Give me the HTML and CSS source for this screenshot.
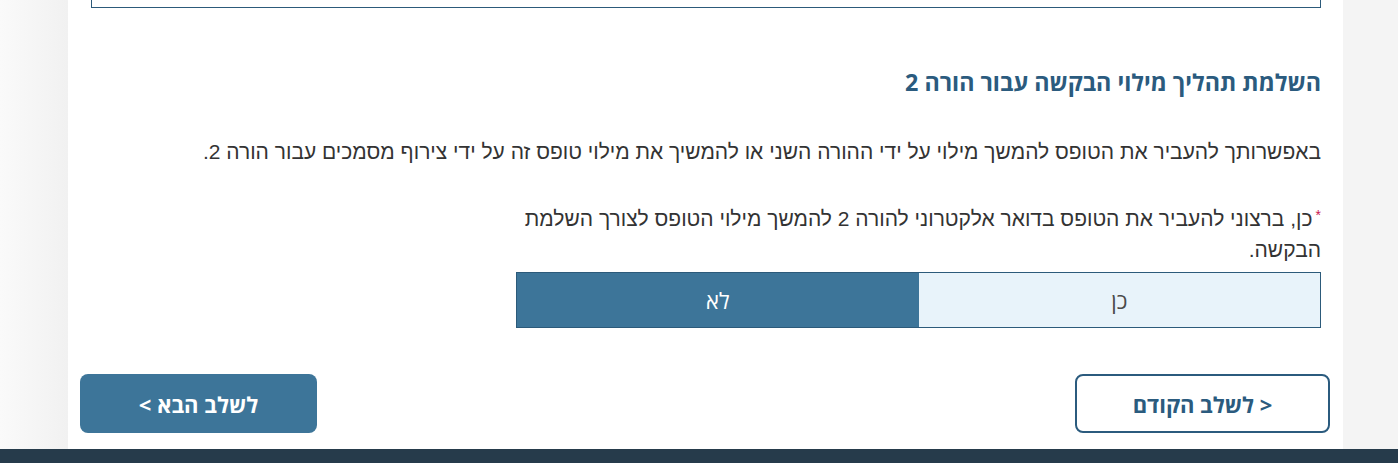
FILE: index.html
```html
<!DOCTYPE html>
<html lang="he">
<head>
<meta charset="utf-8">
<title>השלמת תהליך</title>
<link rel="stylesheet" href="styles.css">
</head>
<body>
<div class="page">
  <main class="content" dir="rtl">
    <div class="prev-box"></div>
    <section class="section">
      <h2 class="title">השלמת תהליך מילוי הבקשה עבור הורה 2</h2>
      <p class="intro">באפשרותך להעביר את הטופס להמשך מילוי על ידי ההורה השני או להמשיך את מילוי טופס זה על ידי צירוף מסמכים עבור הורה 2.</p>
      <div class="question">
        <p class="label"><span class="req">*</span>כן, ברצוני להעביר את הטופס בדואר אלקטרוני להורה 2 להמשך מילוי הטופס לצורך השלמת הבקשה.</p>
        <div class="toggle">
          <button class="opt">כן</button>
          <button class="opt selected">לא</button>
        </div>
      </div>
    </section>
    <div class="nav">
      <button class="btn btn-prev"><span class="chev" dir="ltr">&gt;</span> לשלב הקודם</button>
      <button class="btn btn-next">לשלב הבא <span class="chev" dir="ltr">&lt;</span></button>
    </div>
  </main>
</div>
<footer class="footer"></footer>
</body>
</html>
```
FILE: styles.css
```css
html, body {
  margin: 0;
  padding: 0;
}
body {
  background: linear-gradient(to right, #fafafa 0, #f1f1f1 68px, #f4f4f4 68px);
  font-family: "Liberation Sans", Arial, sans-serif;
  color: #333;
  height: 463px;
  overflow: hidden;
}
.page {
  margin-left: 68px;
  width: 1275px;
  background: #fff;
  height: 449px;
}
.content {
  display: flex;
  flex-direction: column;
}
.prev-box {
  margin: 0 22px 0 23px;
  height: 7px;
  border: 1px solid #2c5a7a;
  border-top: none;
}
.section {
  padding: 0 22px 0 23px;
}
.title {
  margin: 59px 0 0;
  font-family: "Open Sans", "DejaVu Sans", sans-serif;
  font-weight: 700;
  font-size: 23.3px;
  line-height: 31px;
  color: #2b5b7e;
}
.intro {
  margin: 40px 0 0;
  font-size: 21px;
  line-height: 28px;
}
.question {
  width: 805px;
  margin-top: 37px;
}
.label {
  margin: 0;
  font-size: 21px;
  line-height: 31px;
}
.req {
  display: inline-block;
  color: #c8174f;
  font-size: 14px;
  line-height: 14px;
  vertical-align: 6px;
  margin-left: 3px;
}
.toggle {
  display: flex;
  margin-top: 7px;
  border: 1px solid #2c5a7a;
  height: 54px;
}
.opt {
  flex: 1;
  border: none;
  margin: 0;
  font-family: "Open Sans", "DejaVu Sans", sans-serif;
  font-size: 22px;
  background: #e8f3fa;
  color: #4a4a4a;
}
.opt.selected {
  background: #3d7599;
  color: #fff;
}
.nav {
  display: flex;
  justify-content: space-between;
  padding: 0 13px 0 12px;
  margin-top: 46px;
}
.btn {
  font-family: "Open Sans", "DejaVu Sans", sans-serif;
  font-weight: 700;
  font-size: 22px;
  border-radius: 8px;
  height: 59px;
  margin: 0;
}
.btn-prev {
  width: 255px;
  background: #fff;
  color: #2b5b7e;
  border: 2px solid #2b5b7e;
}
.btn-next {
  width: 237px;
  background: #3d7599;
  color: #fff;
  border: none;
}
.footer {
  height: 14px;
  background: #263b4b;
}
```
